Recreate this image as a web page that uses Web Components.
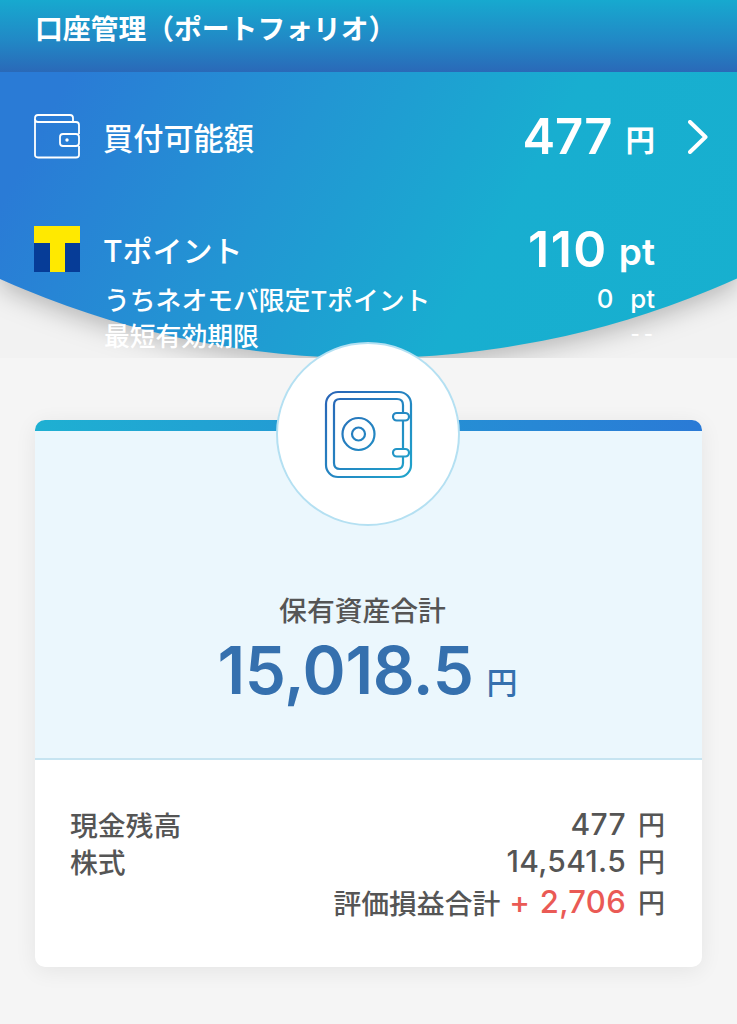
<!DOCTYPE html>
<html lang="ja"><head><meta charset="utf-8"><title>口座管理</title>
<style>
html,body{margin:0;padding:0;background:#f5f5f5}
body{width:737px;height:1024px;overflow:hidden;font-family:Inter,"Noto Sans CJK JP",sans-serif}
</style></head><body>
<pf-app>
  <pf-header>口座管理（ポートフォリオ）</pf-header>
  <pf-hero>
    <pf-row kind="main" chevron label-size="30.2" value-size="49" unit-size="29.5" unit-gap="13" style="margin-bottom:66px">
      <pf-wallet-icon slot="icon"></pf-wallet-icon>
      <span slot="label">買付可能額</span>
      <span slot="value">477</span>
      <span slot="unit">円</span>
    </pf-row>
    <pf-row kind="main" label-size="30" value-size="50" unit-size="37" value-spacing="1.5" unit-gap="11">
      <pf-tpoint-logo slot="icon"></pf-tpoint-logo>
      <span slot="label">Tポイント</span>
      <span slot="value">110</span>
      <span slot="unit">pt</span>
    </pf-row>
    <pf-sub-row style="margin-top:9px">
      <span slot="label">うちネオモバ限定Tポイント</span>
      <span slot="value" style="word-spacing:1.5px">0&nbsp;&nbsp;pt</span>
    </pf-sub-row>
    <pf-sub-row>
      <span slot="label">最短有効期限</span>
      <span slot="value" style="font-size:20px;letter-spacing:4px;margin-right:-2px">--</span>
    </pf-sub-row>
  </pf-hero>
  <pf-card>
    <pf-safe-badge slot="badge"></pf-safe-badge>
    <pf-total slot="summary" amount="15,018.5">保有資産合計</pf-total>
    <pf-detail amount="477">現金残高</pf-detail>
    <pf-detail amount="14,541.5">株式</pf-detail>
    <pf-detail amount="+ 2,706" trail="評価損益合計" gain style="margin-top:4px"></pf-detail>
  </pf-card>
</pf-app>
<script>
function def(name, html, extra){
  const t=document.createElement('template'); t.innerHTML=html;
  customElements.define(name, class extends HTMLElement{
    constructor(){super(); this.attachShadow({mode:'open'}).appendChild(t.content.cloneNode(true));}
    connectedCallback(){ if(extra) extra(this, this.shadowRoot); }
  });
}
def('pf-app',`<style>:host{display:block;width:737px;height:1024px;background:#f5f5f5}</style><slot></slot>`);
def('pf-header',`<style>:host{display:flex;align-items:center;box-sizing:border-box;height:72px;padding:0 0 18px 35px;background:linear-gradient(180deg,#17a9cf 0%,#2189c6 55%,#2a69b8 100%);color:#fff;font-size:27.8px;font-weight:700;white-space:nowrap}</style><slot></slot>`);
def('pf-hero',`<style>
:host{display:block;position:relative;box-sizing:border-box;height:286px;padding-top:42px;overflow:hidden;background:#f2f2f2}
.wrap{position:absolute;inset:0;filter:drop-shadow(0 6px 13px rgba(0,0,0,.26))}
.sky{position:absolute;inset:0;background:linear-gradient(118deg,#2a7bd6 8%,#2296d3 38%,#18aed0 66%,#17b0cf 100%);clip-path:circle(896px at 368px -610px)}
.c{position:relative}
</style><div class="wrap"><div class="sky"></div></div><div class="c"><slot></slot></div>`);
def('pf-row',`<style>
:host{display:flex;align-items:center;padding-left:34px;height:46px;color:#fff}
.ic{width:46px;height:46px;display:flex;margin-right:23px;flex:none}
.l{flex:1;font-weight:500;white-space:nowrap}
.v{font-weight:600;white-space:nowrap;line-height:46px}
.u{font-weight:600;white-space:nowrap;line-height:46px;position:relative;top:3px}
.t{width:82px;flex:none;display:flex;padding-left:33px;box-sizing:border-box}
svg{display:block}
</style><div class="ic"><slot name="icon"></slot></div><div class="l"><slot name="label"></slot></div><div class="v"><slot name="value"></slot></div><div class="u"><slot name="unit"></slot></div><div class="t"></div>`,(el,s)=>{
  s.querySelector('.l').style.fontSize=el.getAttribute('label-size')+'px';
  const v=s.querySelector('.v');v.style.fontSize=el.getAttribute('value-size')+'px';
  if(el.getAttribute('value-spacing'))v.style.letterSpacing=el.getAttribute('value-spacing')+'px';
  const u=s.querySelector('.u');u.style.fontSize=el.getAttribute('unit-size')+'px';u.style.marginLeft=el.getAttribute('unit-gap')+'px';
  if(el.hasAttribute('chevron')) s.querySelector('.t').innerHTML='<svg width="22" height="34" viewBox="0 0 22 34"><path d="M2 2 L17.5 17 L2 32" fill="none" stroke="#fff" stroke-width="4" stroke-linecap="round" stroke-linejoin="round"/></svg>';
});
def('pf-sub-row',`<style>
:host{display:flex;align-items:center;height:35.5px;padding:0 82px 0 104px;color:#fff;font-size:25.8px;font-weight:500;white-space:nowrap;justify-content:space-between}
</style><slot name="label"></slot><slot name="value"></slot>`);
def('pf-wallet-icon',`<style>:host{display:block;width:46px;height:46px}svg{display:block}</style><svg width="46" height="46" viewBox="0 0 46 46" fill="none" stroke="#fff" stroke-width="1.8"><path d="M1 6 V4 Q1 1 4 1 H36 Q39 1 39 4 V8"/><path d="M1 5 Q1 8 4 8 H42 Q45 8 45 11 V20 M45 32 V41 Q45 43.5 42 43.5 H4 Q1 43.5 1 41 V5"/><rect x="26" y="20" width="19" height="12" rx="3"/><circle cx="33" cy="26" r="1.7" fill="#fff" stroke="none"/></svg>`);
def('pf-tpoint-logo',`<style>:host{display:block;width:46px;height:46px}svg{display:block}</style><svg width="46" height="46" viewBox="0 0 46 46"><rect width="46" height="46" fill="#063c97"/><path d="M0 0 H46 V17 H31 V46 H16 V17 H0 Z" fill="#ffe900"/></svg>`);
def('pf-card',`<style>
:host{display:block;box-sizing:border-box;position:relative;width:667px;height:547px;margin:62px 0 0 35px;background:#fff;border-radius:10px;box-shadow:0 4px 22px rgba(0,0,0,.07)}
.bar{height:11px;border-radius:10px 10px 0 0;background:linear-gradient(90deg,#1eb0d2 0%,#2a7ad6 100%)}
.badge{position:absolute;left:241px;top:-78px}
.sum{height:329px;box-sizing:border-box;background:#ebf7fd;border-bottom:2px solid #c6e4f1;padding-top:164px}
.det{padding:45px 37px 0 35px}
</style><div class="bar"></div><div class="badge"><slot name="badge"></slot></div><div class="sum"><slot name="summary"></slot></div><div class="det"><slot></slot></div>`);
def('pf-safe-badge',`<style>
:host{display:flex;align-items:center;justify-content:center;box-sizing:border-box;width:184px;height:184px;border-radius:50%;background:#fff;border:2px solid #b4e0f2}
svg{display:block}
</style><svg width="90" height="90" viewBox="0 0 90 90" fill="none" stroke="url(#g)" stroke-width="2.2">
<defs><linearGradient id="g" gradientUnits="userSpaceOnUse" x1="0" y1="0" x2="90" y2="90"><stop offset="0" stop-color="#2a62b6"/><stop offset="1" stop-color="#1fa6cc"/></linearGradient></defs>
<rect x="3" y="3" width="85" height="85" rx="12"/>
<path d="M80 24 V16 Q80 10 74 10 H17 Q11 10 11 16 V74 Q11 80 17 80 H74 Q80 80 80 74 V68 M80 32 V60"/>
<rect x="70" y="24" width="16" height="7.5" rx="3.7"/><rect x="70" y="60" width="16" height="7.5" rx="3.7"/>
<circle cx="35.5" cy="45" r="16"/><circle cx="35.5" cy="45" r="6.5"/></svg>`);
def('pf-total',`<style>
:host{display:block;text-align:center;color:#555}
.l{height:32px;line-height:32px;font-size:27.8px;font-weight:500;padding-right:12px}
.r{height:60px;line-height:60px;margin-top:14px;white-space:nowrap;padding-right:2px}
.a{font-size:65.5px;font-weight:600;color:#3570ae;letter-spacing:-.4px}
.u{font-size:31px;font-weight:500;color:#3570ae;margin-left:13px}
</style><div class="l"><slot></slot></div><div class="r"><span class="a"></span><span class="u">円</span></div>`,(el,s)=>{s.querySelector('.a').textContent=el.getAttribute('amount')});
def('pf-detail',`<style>
:host{display:flex;align-items:center;height:37px;color:#555;font-size:27.8px;white-space:nowrap;font-weight:500}
.l{flex:1}
.t{margin-right:9px}
.a{font-size:30px;letter-spacing:.3px}
.a.g{color:#ea5a55;font-size:31px;word-spacing:1px}
.u{margin-left:12px;font-size:27px}
</style><div class="l"><slot></slot></div><span class="t"></span><span class="a"></span><span class="u">円</span>`,(el,s)=>{
  const a=s.querySelector('.a');a.textContent=el.getAttribute('amount');
  if(el.hasAttribute('gain'))a.classList.add('g');
  s.querySelector('.t').textContent=el.getAttribute('trail')||'';
  if(!el.getAttribute('trail'))s.querySelector('.t').style.margin='0';
});
</script>
</body></html>
